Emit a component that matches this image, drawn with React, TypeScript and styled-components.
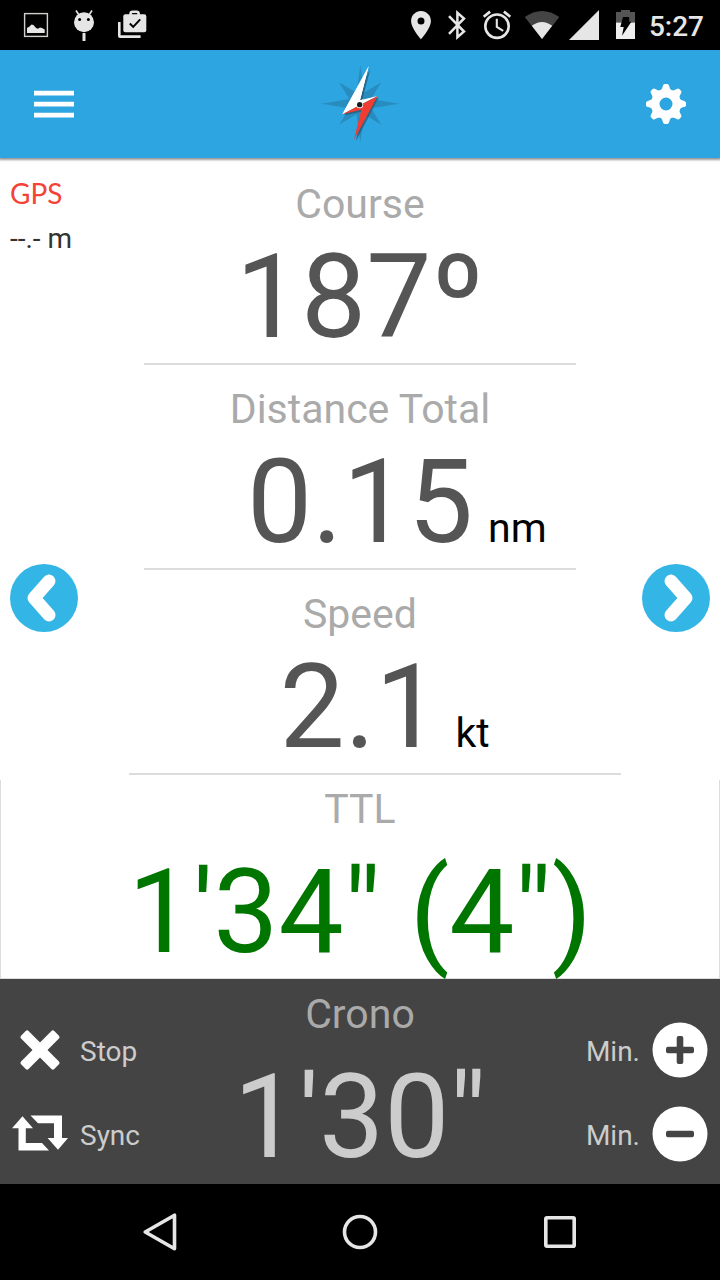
import React from "react";
import styled, { createGlobalStyle } from "styled-components";

const GlobalStyle = createGlobalStyle`
  *, *::before, *::after { box-sizing: border-box; }
  body {
    margin: 0;
    background: #fff;
    font-family: Roboto, "Liberation Sans", sans-serif;
  }
  button {
    border: 0;
    padding: 0;
    background: none;
    font: inherit;
    color: inherit;
    cursor: pointer;
  }
  svg { display: block; flex: none; }
`;

const Screen = styled.div`
  display: flex;
  flex-direction: column;
  min-height: 100vh;
`;

const StatusBar = styled.div`
  display: flex;
  justify-content: space-between;
  height: 50px;
  padding: 0 16px 0 12px;
  background: #000;
`;

const StatusGroup = styled.div`
  display: flex;
  align-items: center;
`;

const Clock = styled.time`
  padding: 4px 0 0 1px;
  font-size: 28px;
  font-weight: 500;
  line-height: 32px;
  color: #e6e6e6;
`;

const AppHeader = styled.header`
  position: relative;
  display: flex;
  align-items: center;
  justify-content: space-between;
  height: 108px;
  background: #2da5e0;
  box-shadow: 0 1px 2px 1px rgba(0, 0, 0, 0.4);
`;

const HeaderButton = styled.button`
  display: flex;
  align-items: center;
  justify-content: center;
  width: 108px;
  height: 108px;
`;

const Main = styled.main`
  display: flex;
  flex: 1;
  flex-direction: column;
  padding-top: 2px;
`;

const Dashboard = styled.section`
  display: grid;
  flex: 1;
  grid-template-columns: 1fr 60% 1fr;
`;

const Side = styled.div<{ $end?: boolean }>`
  display: flex;
  flex-direction: column;
  justify-content: ${(p) => (p.$end ? "flex-end" : "space-between")};
  align-items: ${(p) => (p.$end ? "flex-end" : "flex-start")};
  padding: 13px 10px 148px;
`;

const GpsStatus = styled.div`
  display: flex;
  flex-direction: column;
  gap: 6px;
  font-size: 28px;
  line-height: 40px;
  color: #333;
`;

const GpsLabel = styled.span`
  font-family: Lato, sans-serif;
  color: #f44336;
`;

const PageButton = styled.button`
  border-radius: 50%;
`;

const Readings = styled.div`
  display: flex;
  flex-direction: column;
  padding-bottom: 5px;
`;

const Reading = styled.div<{ $wide?: boolean }>`
  margin: ${(p) => (p.$wide ? "0 -45px 0 -15px" : "0")};
  padding: ${(p) => (p.$wide ? "20px 45px 6px 15px" : "20px 0 6px")};
  border-bottom: 2px solid #dcdcdc;
`;

const Label = styled.h2<{ $gap?: number }>`
  margin: 0 0 ${(p) => p.$gap ?? 9}px;
  font-size: 41px;
  font-weight: 400;
  line-height: 48px;
  text-align: center;
  color: #aaa;
`;

const ValueRow = styled.div`
  display: grid;
  grid-template-columns: 1fr auto 1fr;
  align-items: baseline;
`;

const Value = styled.div<{ $color?: string }>`
  grid-column: 2;
  font-size: 116px;
  line-height: 120px;
  text-align: center;
  white-space: nowrap;
  color: ${(p) => p.$color ?? "#555"};
`;

const Unit = styled.span`
  padding-left: 15px;
  font-size: 41px;
  line-height: 48px;
  color: #000;
`;

const TimeToLine = styled.section`
  padding: 5px 0 6px;
  border: 1px solid #dcdcdc;
  border-top: 0;
`;

const Chrono = styled.section`
  display: grid;
  grid-template-columns: 1fr auto 1fr;
  background: #444;
  color: #ccc;
`;

const ChronoTime = styled.div`
  padding: 11px 0 7px;
`;

const Controls = styled.div<{ $right?: boolean }>`
  display: flex;
  flex-direction: column;
  align-items: ${(p) => (p.$right ? "flex-end" : "flex-start")};
  padding: 29px 0 8px;
`;

const ControlButton = styled.button`
  display: flex;
  align-items: center;
  height: 84px;
`;

const ControlText = styled.span`
  padding-top: 4px;
  font-size: 28px;
  line-height: 32px;
`;

const NavBar = styled.nav`
  display: flex;
  height: 96px;
  padding: 0 60px;
  background: #000;
`;

const NavButton = styled.button`
  display: flex;
  flex: 1;
  align-items: center;
  justify-content: center;
`;

const LIGHT = "#e6e6e6";

const PictureIcon = () => (
  <svg width="48" height="50" aria-hidden="true">
    <rect x="12.6" y="13.6" width="22.8" height="22.8" fill="none" stroke="#cfd0cc" strokeWidth="1.4" />
    <path d="M15 33v-5l2.500-1.500 2-2 2 .6 2.500 3 2 .7 2-1.300 2 .5 2.700 1.500V33z" fill={LIGHT} />
  </svg>
);

const DroidIcon = () => (
  <svg width="48" height="50" aria-hidden="true">
    <path d="M19 15l-3-4.500M29 15l3-4.500" stroke={LIGHT} strokeWidth="1.600" />
    <circle cx="24" cy="22.200" r="10" fill={LIGHT} />
    <circle cx="19.600" cy="19.500" r="1.500" fill="#000" />
    <circle cx="28.400" cy="19.500" r="1.500" fill="#000" />
    <path d="M24 33v8" stroke={LIGHT} strokeWidth="3" />
  </svg>
);

const BriefcaseIcon = () => (
  <svg width="48" height="50" aria-hidden="true">
    <path d="M10 22h2.600v13.300H32.600V38H12q-2 0-2-2z" fill={LIGHT} />
    <path d="M22.600 15.500v-1.800q0-2 2-2h4q2 0 2 2v1.800" fill="none" stroke={LIGHT} strokeWidth="2.600" />
    <rect x="15.300" y="14.300" width="23" height="18" rx="2" fill={LIGHT} />
    <path d="M21.800 23.500l3.400 3.400 7-7.500" fill="none" stroke="#000" strokeWidth="2" />
  </svg>
);

const PinIcon = () => (
  <svg width="36" height="50" aria-hidden="true">
    <path
      fillRule="evenodd"
      fill={LIGHT}
      d="M18 11c-5.500 0-9.900 4.400-9.900 9.900C8.100 28.300 18 39.200 18 39.200s9.900-10.900 9.900-18.300C27.900 15.400 23.500 11 18 11zm0 13.400a3.500 3.500 0 1 1 0-7 3.500 3.500 0 0 1 0 7z"
    />
  </svg>
);

const BluetoothIcon = () => (
  <svg width="36" height="50" aria-hidden="true">
    <path d="M10 16.200L25 31.500l-6.600 5.800V12.700L25 18.500 10 33.800" fill="none" stroke={LIGHT} strokeWidth="2.500" />
  </svg>
);

const AlarmIcon = () => (
  <svg width="44" height="50" aria-hidden="true" fill="none" stroke={LIGHT}>
    <circle cx="22" cy="26.200" r="11.700" strokeWidth="2.600" />
    <path d="M21.800 18.800v8l6.400 4" strokeWidth="2.100" />
    <path d="M8.700 16.800l6.400-5.200M35.300 16.800l-6.400-5.200" strokeWidth="2.700" />
  </svg>
);

const WifiIcon = () => (
  <svg width="46" height="50" aria-hidden="true">
    <path d="M23 39L5.700 16.900q17.300-12 34.600 0z" fill="#444" />
    <path d="M23 39L12.800 25.800q10.200-7.600 20.400 0z" fill={LIGHT} />
  </svg>
);

const SignalIcon = () => (
  <svg width="38" height="50" aria-hidden="true">
    <path d="M4 40L34 10v30z" fill={LIGHT} />
  </svg>
);

const BatteryIcon = () => (
  <svg width="45" height="50" aria-hidden="true">
    <path d="M13 12h5v-2h9v2h5v10.500H13z" fill="#555" />
    <path d="M13 22.500h19V39H13z" fill="#eee" />
    <path d="M20 17h6.200v4.800h2.200L19 35.700l1.700-8.600h-3.400z" fill="#000" />
  </svg>
);

const MenuIcon = () => (
  <svg width="40" height="28" aria-hidden="true" stroke="#fff" strokeWidth="4.600">
    <path d="M0 3.100h40M0 14.100h40M0 25.100h40" />
  </svg>
);

const GearIcon = () => (
  <svg width="40" height="40" viewBox="-20 -20 40 40" aria-hidden="true">
    <circle r="10.700" fill="none" stroke="#fff" strokeWidth="8.400" />
    {[0, 45, 90, 135, 180, 225, 270, 315].map((a) => (
      <path
        key={a}
        transform={`rotate(${a})`}
        fill="#fff"
        d="M-6.200-13C-3.800-14.600-3.600-16.500-3.100-18.200Q-2.600-20-1.200-20H1.200Q2.600-20 3.100-18.200C3.600-16.500 3.800-14.600 6.200-13z"
      />
    ))}
  </svg>
);

const CompassLogo = () => (
  <svg width="84" height="84" viewBox="54 35 252 252" role="img" aria-label="Compass">
    <path
      fill="#288dbe"
      d="M181 44l11 83 52-31-31 50 84 14-84 14 31 49-52-31-11 86-11-86-53 31 31-49-84-14 84-14-31-50 53 31z"
    />
    <path d="M211 57L186 152 236 142 168 272 184 184 134 195z" fill="#26566f" opacity="0.7" />
    <path d="M206 48L180 150 233 137 127 192z" fill="#fff" />
    <path d="M206 48L180 150 192 147 152 179 127 192z" fill="#fff" />
    <path d="M233 137L162 268 184 178 127 192z" fill="#f03c32" />
    <circle cx="179" cy="163" r="10.500" fill="#fff" />
    <circle cx="179" cy="163" r="8" fill="#1b1b1b" />
  </svg>
);

const Chevron = ({ right }: { right?: boolean }) => (
  <svg width="68" height="68" aria-hidden="true">
    <circle cx="34" cy="34" r="34" fill="#33b5e5" />
    <path
      d={right ? "M29 17L44 34 29 51" : "M39 17L24 34 39 51"}
      fill="none"
      stroke="#fff"
      strokeWidth="13"
      strokeLinecap="round"
      strokeLinejoin="round"
    />
  </svg>
);

const StopIcon = () => (
  <svg width="80" height="56" aria-hidden="true" fill="#fff">
    <rect x="16.500" y="22.700" width="47" height="10.600" rx="2" transform="rotate(45 40 28)" />
    <rect x="16.500" y="22.700" width="47" height="10.600" rx="2" transform="rotate(-45 40 28)" />
  </svg>
);

const SyncIcon = () => (
  <svg width="80" height="56" aria-hidden="true" fill="#fff">
    <path d="M22.500 10.300L33 22.300H25.800V37H42l7 7.600H18.500V22.300H12z" />
    <path d="M30.500 9.500H62V32h6L58 43.800 47.600 32H54V17.300H38z" />
  </svg>
);

const MinuteIcon = ({ plus }: { plus?: boolean }) => (
  <svg width="80" height="56" aria-hidden="true">
    <circle cx="40" cy="28" r="27.500" fill="#fff" />
    <rect x="26" y="24.700" width="28" height="6.600" rx="2" fill="#444" />
    {plus && <rect x="36.700" y="14" width="6.600" height="28" rx="2" fill="#444" />}
  </svg>
);

const readings = [
  { label: "Course", value: "187º" },
  { label: "Distance Total", value: "0.15", unit: "nm" },
  { label: "Speed", value: "2.1", unit: "kt" },
];

export default function App() {
  return (
    <Screen>
      <GlobalStyle />
      <StatusBar>
        <StatusGroup>
          <PictureIcon />
          <DroidIcon />
          <BriefcaseIcon />
        </StatusGroup>
        <StatusGroup>
          <PinIcon />
          <BluetoothIcon />
          <AlarmIcon />
          <WifiIcon />
          <SignalIcon />
          <BatteryIcon />
          <Clock>5:27</Clock>
        </StatusGroup>
      </StatusBar>

      <AppHeader>
        <HeaderButton aria-label="Menu">
          <MenuIcon />
        </HeaderButton>
        <CompassLogo />
        <HeaderButton aria-label="Settings">
          <GearIcon />
        </HeaderButton>
      </AppHeader>

      <Main>
        <Dashboard>
          <Side>
            <GpsStatus>
              <GpsLabel>GPS</GpsLabel>
              <span>--.- m</span>
            </GpsStatus>
            <PageButton aria-label="Previous page">
              <Chevron />
            </PageButton>
          </Side>
          <Readings>
            {readings.map((r, i) => (
              <Reading key={r.label} $wide={i === readings.length - 1}>
                <Label>{r.label}</Label>
                <ValueRow>
                  <Value>{r.value}</Value>
                  {r.unit && <Unit>{r.unit}</Unit>}
                </ValueRow>
              </Reading>
            ))}
          </Readings>
          <Side $end>
            <PageButton aria-label="Next page">
              <Chevron right />
            </PageButton>
          </Side>
        </Dashboard>

        <TimeToLine>
          <Label $gap={19}>TTL</Label>
          <Value $color="#007500">1'34" (4")</Value>
        </TimeToLine>

        <Chrono>
          <Controls>
            <ControlButton>
              <StopIcon />
              <ControlText>Stop</ControlText>
            </ControlButton>
            <ControlButton>
              <SyncIcon />
              <ControlText>Sync</ControlText>
            </ControlButton>
          </Controls>
          <ChronoTime>
            <Label $gap={19}>Crono</Label>
            <Value $color="#ccc">1'30"</Value>
          </ChronoTime>
          <Controls $right>
            <ControlButton aria-label="Add a minute">
              <ControlText>Min.</ControlText>
              <MinuteIcon plus />
            </ControlButton>
            <ControlButton aria-label="Remove a minute">
              <ControlText>Min.</ControlText>
              <MinuteIcon />
            </ControlButton>
          </Controls>
        </Chrono>
      </Main>

      <NavBar>
        <NavButton aria-label="Back">
          <svg width="40" height="40" aria-hidden="true">
            <path d="M34.500 3.200V36.800L5.200 20z" fill="none" stroke={LIGHT} strokeWidth="3.600" strokeLinejoin="round" />
          </svg>
        </NavButton>
        <NavButton aria-label="Home">
          <svg width="40" height="40" aria-hidden="true">
            <circle cx="20" cy="20" r="15.500" fill="none" stroke={LIGHT} strokeWidth="3.600" />
          </svg>
        </NavButton>
        <NavButton aria-label="Recent apps">
          <svg width="40" height="40" aria-hidden="true">
            <rect x="5.800" y="5.800" width="28.400" height="28.400" rx="1" fill="none" stroke={LIGHT} strokeWidth="3.600" />
          </svg>
        </NavButton>
      </NavBar>
    </Screen>
  );
}
